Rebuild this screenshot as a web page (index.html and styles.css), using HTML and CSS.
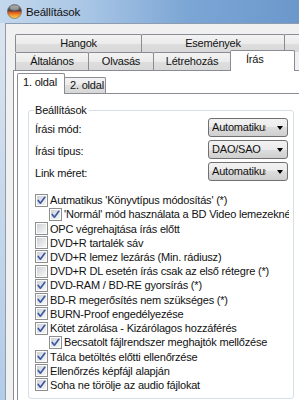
FILE: index.html
```html
<!DOCTYPE html>
<html>
<head>
    <title>Beállítások</title>
    <link rel="stylesheet" href="styles.css">
</head>
<body>
    <svg class="defs">
        <defs>
            <linearGradient id="cbg" x1="0" y1="0" x2="1" y2="1">
                <stop offset="0" stop-color="#cdd1d7"/>
                <stop offset="1" stop-color="#f7f7f7"/>
            </linearGradient>
            <linearGradient id="orb" x1="0" y1="0" x2="0" y2="1">
                <stop offset="0" stop-color="#8a8a8a"/>
                <stop offset="0.45" stop-color="#454545"/>
                <stop offset="0.55" stop-color="#e0521c"/>
                <stop offset="0.8" stop-color="#f3a530"/>
                <stop offset="1" stop-color="#f6d35c"/>
            </linearGradient>
        </defs>
        <symbol id="cb-off" viewBox="0 0 13 13">
            <rect x="0.5" y="0.5" width="12" height="12" fill="#fcfcfc" stroke="#8e8f8f"/>
            <rect x="2" y="2" width="9" height="9" fill="url(#cbg)"/>
        </symbol>
        <symbol id="cb-on" viewBox="0 0 13 13">
            <rect x="0.5" y="0.5" width="12" height="12" fill="#fcfcfc" stroke="#8e8f8f"/>
            <rect x="2" y="2" width="9" height="9" fill="url(#cbg)"/>
            <path d="M3.2 6.5 L5.4 9.2 L9.8 3.3" fill="none" stroke="#3b5aa3" stroke-width="1.7" stroke-linecap="round" stroke-linejoin="round"/>
        </symbol>
    </svg>

    <div class="window">
        <div class="titlebar">
            <svg class="appicon" viewBox="0 0 15 15">
                <circle cx="7.5" cy="7.5" r="7" fill="url(#orb)" stroke="#5a5a5a" stroke-width="0.6"/>
                <ellipse cx="7.5" cy="4" rx="4.5" ry="2.4" fill="#fff" opacity="0.35"/>
            </svg>
            <span class="title">Beállítások</span>
        </div>
        <div class="frame">
            <div class="edge"></div>
            <div class="client">
                <div class="tabctl">
                    <div class="tabrow">
                        <div class="tab w-hangok">Hangok</div>
                        <div class="tab w-esem">Események</div>
                        <div class="tab w-more"></div>
                    </div>
                    <div class="tabrow">
                        <div class="tab w-alt">Általános</div>
                        <div class="tab w-olv">Olvasás</div>
                        <div class="tab w-letr">Létrehozás</div>
                        <div class="tab active w-iras">Írás</div>
                    </div>
                    <div class="panel">
                        <div class="subtabs">
                            <div class="subtab active">1. oldal</div>
                            <div class="subtab">2. oldal</div>
                        </div>
                        <div class="subpanel">
                            <fieldset class="group">
                                <legend>Beállítások</legend>
                                <div class="field">
                                    <span class="field-label">Írási mód:</span>
                                    <div class="select"><span class="val">Automatikus</span><i class="arrow"></i></div>
                                </div>
                                <div class="field">
                                    <span class="field-label">Írási típus:</span>
                                    <div class="select"><span class="val">DAO/SAO</span><i class="arrow"></i></div>
                                </div>
                                <div class="field">
                                    <span class="field-label">Link méret:</span>
                                    <div class="select"><span class="val">Automatikus</span><i class="arrow"></i></div>
                                </div>

                                <div class="checks">
                                    <div class="check"><svg class="cb"><use href="#cb-on"/></svg>Autmatikus 'Könyvtípus módosítás' (*)</div>
                                    <div class="check sub clip"><svg class="cb"><use href="#cb-on"/></svg>'Normál' mód használata a BD Video lemezeknél</div>
                                    <div class="check"><svg class="cb"><use href="#cb-off"/></svg>OPC végrehajtása írás előtt</div>
                                    <div class="check"><svg class="cb"><use href="#cb-off"/></svg>DVD+R tartalék sáv</div>
                                    <div class="check"><svg class="cb"><use href="#cb-on"/></svg>DVD+R lemez lezárás (Min. rádiusz)</div>
                                    <div class="check"><svg class="cb"><use href="#cb-off"/></svg>DVD+R DL esetén írás csak az első rétegre (*)</div>
                                    <div class="check"><svg class="cb"><use href="#cb-on"/></svg>DVD-RAM / BD-RE gyorsírás (*)</div>
                                    <div class="check"><svg class="cb"><use href="#cb-on"/></svg>BD-R megerősítés nem szükséges (*)</div>
                                    <div class="check"><svg class="cb"><use href="#cb-on"/></svg>BURN-Proof engedélyezése</div>
                                    <div class="check"><svg class="cb"><use href="#cb-on"/></svg>Kötet zárolása - Kizárólagos hozzáférés</div>
                                    <div class="check sub"><svg class="cb"><use href="#cb-on"/></svg>Becsatolt fájlrendszer meghajtók mellőzése</div>
                                    <div class="check"><svg class="cb"><use href="#cb-on"/></svg>Tálca betöltés előtti ellenőrzése</div>
                                    <div class="check"><svg class="cb"><use href="#cb-on"/></svg>Ellenőrzés képfájl alapján</div>
                                    <div class="check"><svg class="cb"><use href="#cb-on"/></svg>Soha ne törölje az audio fájlokat</div>
                                </div>
                            </fieldset>
                        </div>
                    </div>
                </div>
            </div>
        </div>
    </div>
</body>
</html>
```

FILE: styles.css
```css
html, body {
    margin: 0;
    overflow: hidden;
}

body {
    width: 299px;
    height: 400px;
    background-color: #f0f0f0;
    font-family: 'Liberation Sans', Arial, sans-serif;
    font-size: 11px;
    letter-spacing: -0.2px;
    color: #111;
}

.defs {
    position: absolute;
    width: 0;
    height: 0;
}

.window {
    width: 340px;
}

.titlebar {
    height: 23px;
    display: flex;
    align-items: center;
    padding-left: 7px;
    background: linear-gradient(to right, #c3d8ed 0%, #a9c6e5 25%, #7ca6d5 55%, #6592c8 100%);
}

.appicon {
    width: 15px;
    height: 15px;
    margin-right: 4px;
}

.title {
    font-size: 11.5px;
}

.frame {
    display: flex;
    height: 377px;
}

.edge {
    width: 5px;
    background: linear-gradient(#dbe4ee, #b2cbe7);
}

.client {
    flex: 1;
    border-left: 1px solid #8e9cb0;
    border-top: 1px solid #8e9cb0;
    padding: 10px 0 0 7px;
    background-color: #f0f0f0;
}

.tabctl {
    width: 320px;
}

.tabrow {
    display: flex;
    align-items: flex-end;
    height: 18px;
    padding-left: 2px;
}

.tab {
    box-sizing: border-box;
    height: 18px;
    border: 1px solid #898c95;
    border-bottom: 0;
    border-radius: 2px 2px 0 0;
    margin-right: -1px;
    background: linear-gradient(#f3f3f3, #ebebeb 50%, #dedede 50%, #d8d8d8);
    text-align: center;
    line-height: 17px;
    white-space: nowrap;
}

.tab.active {
    height: 21px;
    margin-bottom: -1px;
    background: #fff;
    text-align: left;
    padding-left: 15px;
    position: relative;
    z-index: 1;
}

.w-hangok { width: 127px; }
.w-esem { width: 144px; }
.w-more { width: 40px; }
.w-alt { width: 74px; }
.w-olv { width: 66px; }
.w-letr { width: 78px; }
.w-iras { width: 65px; }

.panel {
    border: 1px solid #898c95;
    background-color: #fff;
    padding: 2px 0 0 3px;
    height: 340px;
}

.subtabs {
    display: flex;
    align-items: flex-end;
    height: 20px;
}

.subtab {
    box-sizing: border-box;
    width: 42px;
    height: 16px;
    border: 1px solid #898c95;
    border-bottom: 0;
    border-radius: 2px 2px 0 0;
    margin-right: -1px;
    padding-left: 5px;
    background: linear-gradient(#f3f3f3, #ebebeb 50%, #dedede 50%, #d8d8d8);
    line-height: 15px;
    white-space: nowrap;
}

.subtab.active {
    width: 48px;
    height: 21px;
    margin-bottom: -1px;
    background: #fff;
    line-height: 17px;
    position: relative;
    z-index: 1;
}

.subpanel {
    border: 1px solid #898c95;
    padding: 0 0 0 10px;
    height: 320px;
}

.group {
    box-sizing: border-box;
    width: 266px;
    min-width: 0;
    margin: 8px 0 0 0;
    border: 1px solid #d5dfe5;
    border-radius: 3px;
    padding: 0 5px 6px 6px;
}

.group legend {
    padding: 0 2px 0 1px;
    margin-left: -1px;
    line-height: 16px;
}

.field {
    display: flex;
    justify-content: space-between;
    align-items: flex-start;
    height: 19px;
}

.field + .field {
    margin-top: 3px;
}

.field-label {
    padding-top: 3px;
    line-height: 16px;
}

.select {
    box-sizing: border-box;
    width: 80px;
    height: 19px;
    border: 1px solid #707070;
    border-radius: 3px;
    background: linear-gradient(#f2f2f2, #ebebeb 50%, #dddddd 50%, #cfcfcf);
    display: flex;
    align-items: center;
    padding-left: 3px;
}

.select .val {
    width: 54px;
    overflow: hidden;
    white-space: nowrap;
    line-height: 17px;
}

.arrow {
    margin-left: auto;
    margin-right: 4px;
    border-left: 3.5px solid transparent;
    border-right: 3.5px solid transparent;
    border-top: 4px solid #000;
}

.checks {
    margin-top: 12px;
}

.check {
    display: flex;
    align-items: center;
    height: 14.23px;
    white-space: nowrap;
}

.check.sub {
    margin-left: 14px;
}

.check.clip {
    width: 240px;
    overflow: hidden;
}

.cb {
    flex: none;
    width: 13px;
    height: 13px;
    margin-right: 2px;
}
```
